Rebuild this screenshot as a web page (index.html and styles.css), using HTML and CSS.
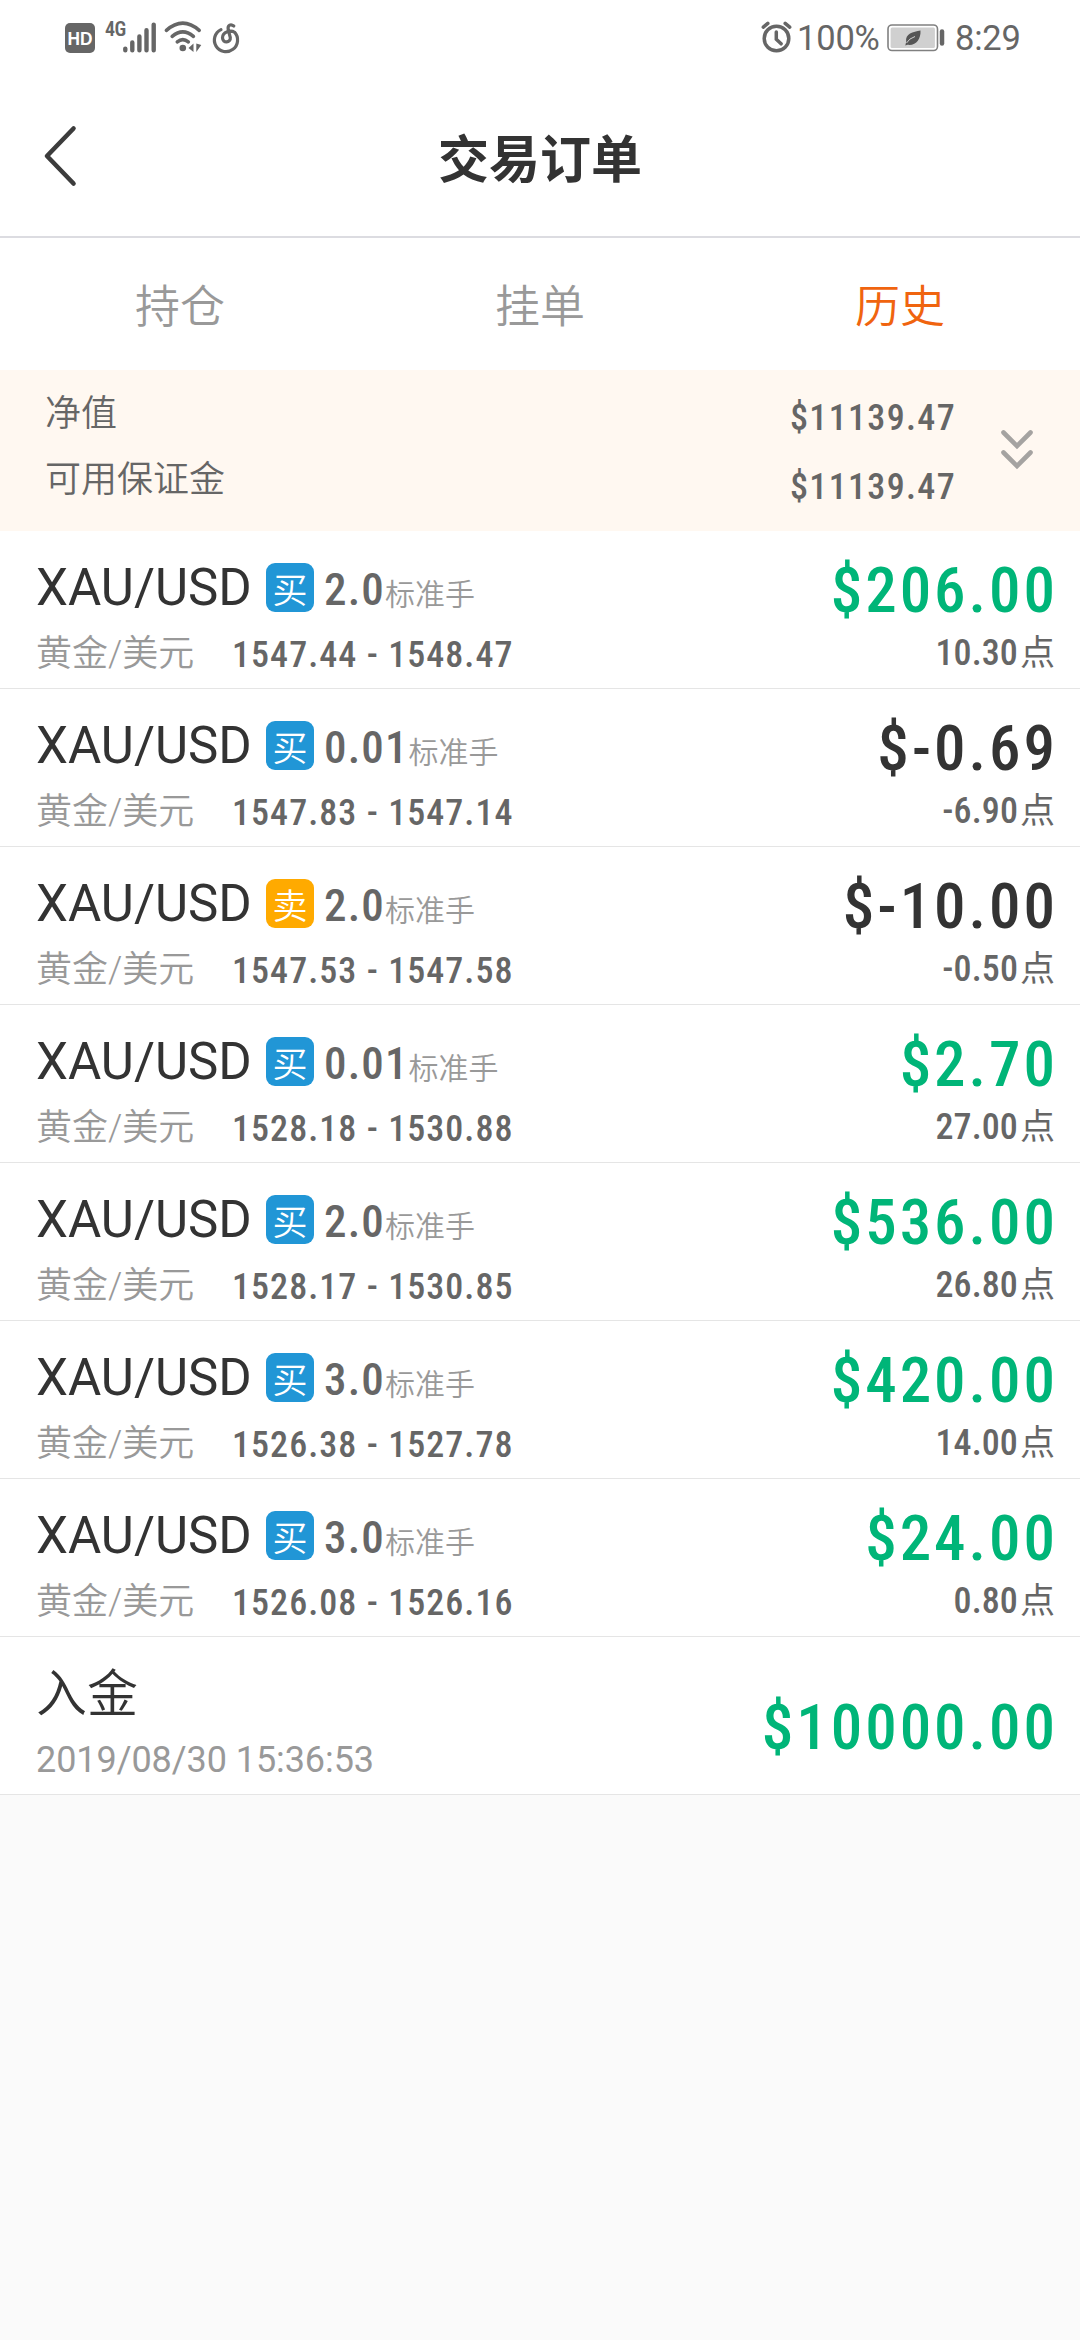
FILE: index.html
```html
<!DOCTYPE html>
<html lang="zh-CN">
<head>
<meta charset="utf-8">
<title>交易订单</title>
<link rel="stylesheet" href="styles.css">
</head>
<body>
<header class="status">
  <div class="status-left">
    <svg class="ic-hd" width="30" height="30" viewBox="0 0 30 30"><rect width="30" height="30" rx="5" fill="#666"/><text x="15" y="21.6" text-anchor="middle" textLength="25" lengthAdjust="spacingAndGlyphs" class="hd-text">HD</text></svg>
    <span class="net">4G</span>
    <svg class="ic-signal" width="34" height="31" viewBox="0 0 34 31" stroke="#666" stroke-width="4.4" stroke-linecap="round"><path d="M2.3 26.6v1.6M9.3 20.5v7.7M16.4 14.5v13.7M23.5 8.3v19.9M30.7 2.6v25.6"/></svg>
    <svg class="ic-wifi" width="38" height="32" viewBox="0 0 38 32" fill="none" stroke="#666" stroke-width="3.6" stroke-linecap="round"><path d="M2.4 9.4Q18.8-5 35.2 9.4M8.2 15.4Q18.8 6.4 29.4 15.4M13.3 20.8Q18.8 16.4 24.3 20.8"/><circle cx="18.8" cy="27" r="3.3" fill="#666" stroke="none"/><path d="M29.5 22.5v8.5l-5-4zM32.3 22.5v8.5l5-7z" fill="#666" stroke="none"/></svg>
    <svg class="ic-music" width="28" height="32" viewBox="0 0 28 32" fill="none" stroke="#666" stroke-width="3.2" stroke-linecap="round"><path d="M8 7.6A11.6 11.6 0 1 0 21.5 10.2C18 7.8 9.5 9.5 9.5 15.8C9.5 21.5 18 21 17.3 15.5L15.2 7.5C14.4 2.8 18 1.8 20.8 4"/></svg>
  </div>
  <div class="status-right">
    <svg class="ic-alarm" width="32" height="32" viewBox="0 0 32 32" fill="none" stroke="#666" stroke-width="3.5" stroke-linecap="round"><circle cx="15.5" cy="17.5" r="12.3"/><path d="M2.3 6.2L6.8 2.4M28.7 6.2L24.2 2.4M15.3 11v7.2l4.8 4.6"/></svg>
    <span class="pct">100%</span>
    <svg class="ic-battery" width="59" height="28" viewBox="0 0 59 28"><rect x="1" y="1" width="49.5" height="25.5" rx="4" fill="#fff" stroke="#808080" stroke-width="1.6"/><rect x="3.6" y="3.6" width="44.3" height="20.3" rx="1.5" fill="#d0d0d0"/><path d="M33.5 6.5C26 8 18 9.5 19.2 17.8L18.3 21.5L20.5 20.8C29 22 34 15 33.5 6.5Z" fill="#555"/><path d="M19.5 19Q22 14.5 28 12.5" fill="none" stroke="#d0d0d0" stroke-width="1"/><path d="M55 7.5v12" stroke="#666" stroke-width="4.5" stroke-linecap="round"/></svg>
    <span class="clock">8:29</span>
  </div>
</header>

<nav class="navbar">
  <svg class="back" width="36" height="62" viewBox="0 0 36 62" fill="none" stroke="#3c3c3c" stroke-width="4.6" stroke-linecap="round" stroke-linejoin="round"><path d="M31.5 3.5L5 31L31.5 58.5"/></svg>
  <h1>交易订单</h1>
</nav>

<div class="tabs">
  <div class="tab">持仓</div>
  <div class="tab">挂单</div>
  <div class="tab active">历史</div>
</div>

<section class="summary">
  <div class="labels"><div>净值</div><div>可用保证金</div></div>
  <div class="values num"><div>$11139.47</div><div>$11139.47</div></div>
  <svg class="more" width="36" height="42" viewBox="0 0 36 42" fill="none" stroke="#a5a3a1" stroke-width="4.6" stroke-linecap="round" stroke-linejoin="miter"><path d="M4.5 4.5L18 18L31.5 4.5M4.5 24.5L18 38L31.5 24.5"/></svg>
</section>

<main class="list">
  <article class="row">
    <div class="left">
      <div class="head"><span class="pair">XAU/USD</span><span class="badge">买</span><span class="qty num">2.0</span><span class="unit">标准手</span></div>
      <div class="sub"><span class="name">黄金/美元</span><span class="price num">1547.44 - 1548.47</span></div>
    </div>
    <div class="right"><div class="amount num up">$206.00</div><div class="points num">10.30<span class="pt">点</span></div></div>
  </article>
  <article class="row">
    <div class="left">
      <div class="head"><span class="pair">XAU/USD</span><span class="badge">买</span><span class="qty num">0.01</span><span class="unit">标准手</span></div>
      <div class="sub"><span class="name">黄金/美元</span><span class="price num">1547.83 - 1547.14</span></div>
    </div>
    <div class="right"><div class="amount num">$-0.69</div><div class="points num">-6.90<span class="pt">点</span></div></div>
  </article>
  <article class="row">
    <div class="left">
      <div class="head"><span class="pair">XAU/USD</span><span class="badge sell">卖</span><span class="qty num">2.0</span><span class="unit">标准手</span></div>
      <div class="sub"><span class="name">黄金/美元</span><span class="price num">1547.53 - 1547.58</span></div>
    </div>
    <div class="right"><div class="amount num">$-10.00</div><div class="points num">-0.50<span class="pt">点</span></div></div>
  </article>
  <article class="row">
    <div class="left">
      <div class="head"><span class="pair">XAU/USD</span><span class="badge">买</span><span class="qty num">0.01</span><span class="unit">标准手</span></div>
      <div class="sub"><span class="name">黄金/美元</span><span class="price num">1528.18 - 1530.88</span></div>
    </div>
    <div class="right"><div class="amount num up">$2.70</div><div class="points num">27.00<span class="pt">点</span></div></div>
  </article>
  <article class="row">
    <div class="left">
      <div class="head"><span class="pair">XAU/USD</span><span class="badge">买</span><span class="qty num">2.0</span><span class="unit">标准手</span></div>
      <div class="sub"><span class="name">黄金/美元</span><span class="price num">1528.17 - 1530.85</span></div>
    </div>
    <div class="right"><div class="amount num up">$536.00</div><div class="points num">26.80<span class="pt">点</span></div></div>
  </article>
  <article class="row">
    <div class="left">
      <div class="head"><span class="pair">XAU/USD</span><span class="badge">买</span><span class="qty num">3.0</span><span class="unit">标准手</span></div>
      <div class="sub"><span class="name">黄金/美元</span><span class="price num">1526.38 - 1527.78</span></div>
    </div>
    <div class="right"><div class="amount num up">$420.00</div><div class="points num">14.00<span class="pt">点</span></div></div>
  </article>
  <article class="row">
    <div class="left">
      <div class="head"><span class="pair">XAU/USD</span><span class="badge">买</span><span class="qty num">3.0</span><span class="unit">标准手</span></div>
      <div class="sub"><span class="name">黄金/美元</span><span class="price num">1526.08 - 1526.16</span></div>
    </div>
    <div class="right"><div class="amount num up">$24.00</div><div class="points num">0.80<span class="pt">点</span></div></div>
  </article>
  <article class="row deposit">
    <div class="left">
      <div class="kind">入金</div>
      <div class="time">2019/08/30 15:36:53</div>
    </div>
    <div class="right"><div class="amount num up">$10000.00</div></div>
  </article>
</main>
</body>
</html>
```

FILE: styles.css
```css
* { box-sizing: border-box; }

body {
  margin: 0;
  min-height: 2340px;
  background: #fafafa;
  color: #333;
  font-family: Roboto, "Noto Sans CJK SC", sans-serif;
  font-weight: 350;
}

svg { display: block; flex: none; overflow: visible; }

.num {
  font-family: "Roboto Condensed", Roboto, "Noto Sans CJK SC", sans-serif;
  font-weight: 500;
  white-space: nowrap;
}

/* status bar */
.status {
  display: flex;
  justify-content: space-between;
  height: 76px;
  padding: 0 61px 0 65px;
  background: #fff;
  color: #666;
}
.status-left, .status-right { display: flex; align-items: flex-start; }
.ic-hd { margin-top: 23px; }
.hd-text { font: 700 19px "Liberation Sans", sans-serif; fill: #fff; }
.net {
  width: 17px;
  margin: 19px 0 0 10px;
  font: 600 20px/20px "Roboto Condensed", Roboto, sans-serif;
  letter-spacing: -0.5px;
}
.ic-signal { margin: 22px 0 0 1px; }
.ic-wifi { margin: 21px 0 0 7px; }
.ic-music { margin: 22px 0 0 11px; }
.ic-alarm { margin-top: 21px; }
.pct, .clock { margin-top: 18px; font: 400 34.5px/40px Roboto, sans-serif; }
.pct { width: 82px; margin-left: 4px; letter-spacing: -0.2px; }
.ic-battery { margin: 24px 0 0 8px; }
.clock { width: 64px; margin-left: 9px; letter-spacing: -0.2px; }

/* title bar */
.navbar {
  display: grid;
  grid-template-columns: 116px 1fr 116px;
  align-items: center;
  height: 162px;
  border-bottom: 2px solid #dcdce1;
  background: #fff;
}
.back { margin-left: 42px; }
h1 {
  margin: -1px 0 0;
  font: 700 51px/60px "Noto Sans CJK SC", sans-serif;
  text-align: center;
  color: #333;
}

.tabs {
  display: grid;
  grid-template-columns: repeat(3, 1fr);
  height: 132px;
  background: #fff;
  color: #999;
  font-family: "Noto Sans CJK SC", sans-serif;
  font-size: 45px;
  line-height: 132px;
  text-align: center;
}
.active { color: #f0640f; }

/* account summary */
.summary {
  display: flex;
  height: 161px;
  padding: 0 45px 0 45px;
  background: #fff8f1;
  color: #666;
  font-size: 36px;
}
.labels { flex: 1; padding-top: 7px; font-family: "Noto Sans CJK SC", sans-serif; line-height: 66px; }
.values { padding-top: 14px; line-height: 69px; text-align: right; letter-spacing: 0.037em; }
.more { margin: 58px 0 0 43px; }

/* history rows */
.row {
  display: flex;
  justify-content: space-between;
  height: 158px;
  padding: 0 25px 0 36px;
  border-bottom: 1px solid #e5e5e5;
  background: #fff;
}
.left { padding-top: 27px; }
.right { padding-top: 30px; text-align: right; }
.head { display: flex; height: 60px; line-height: 60px; }
.pair { width: 230px; font-size: 51px; font-weight: 400; }
.badge {
  width: 48px;
  height: 49px;
  border-radius: 9px;
  margin-top: 5px;
  background: #2196d6;
  color: #fff;
  font: 350 35px/50px "Noto Sans CJK SC", sans-serif;
  text-align: center;
}
.badge.sell { background: #fa0; }
.qty { margin-left: 10px; padding-top: 2px; font-size: 45px; letter-spacing: 0.025em; color: #666; }
.unit { padding-top: 7px; font-size: 30px; color: #999; }
.sub { display: flex; height: 44px; margin-top: 15px; font-size: 36px; line-height: 44px; }
.name { width: 196px; margin-top: -1px; color: #999; }
.price { letter-spacing: 0.029em; color: #666; }
.amount { height: 60px; margin-right: -3px; font-size: 63px; line-height: 60px; letter-spacing: 0.047em; }
.up { color: #00b578; }
.points { height: 44px; margin-top: 10px; font-size: 36px; line-height: 44px; letter-spacing: 0.003em; color: #666; }
.pt { margin-left: 2px; letter-spacing: 0; font-weight: 400; font-size: 35px; }

.deposit .kind { height: 60px; padding-top: 1px; font-size: 51px; line-height: 60px; }
.deposit .time { height: 44px; margin-top: 14px; font-size: 36px; font-weight: 400; line-height: 44px; letter-spacing: -0.07px; color: #999; }
.deposit .right { padding-top: 61px; }
```
